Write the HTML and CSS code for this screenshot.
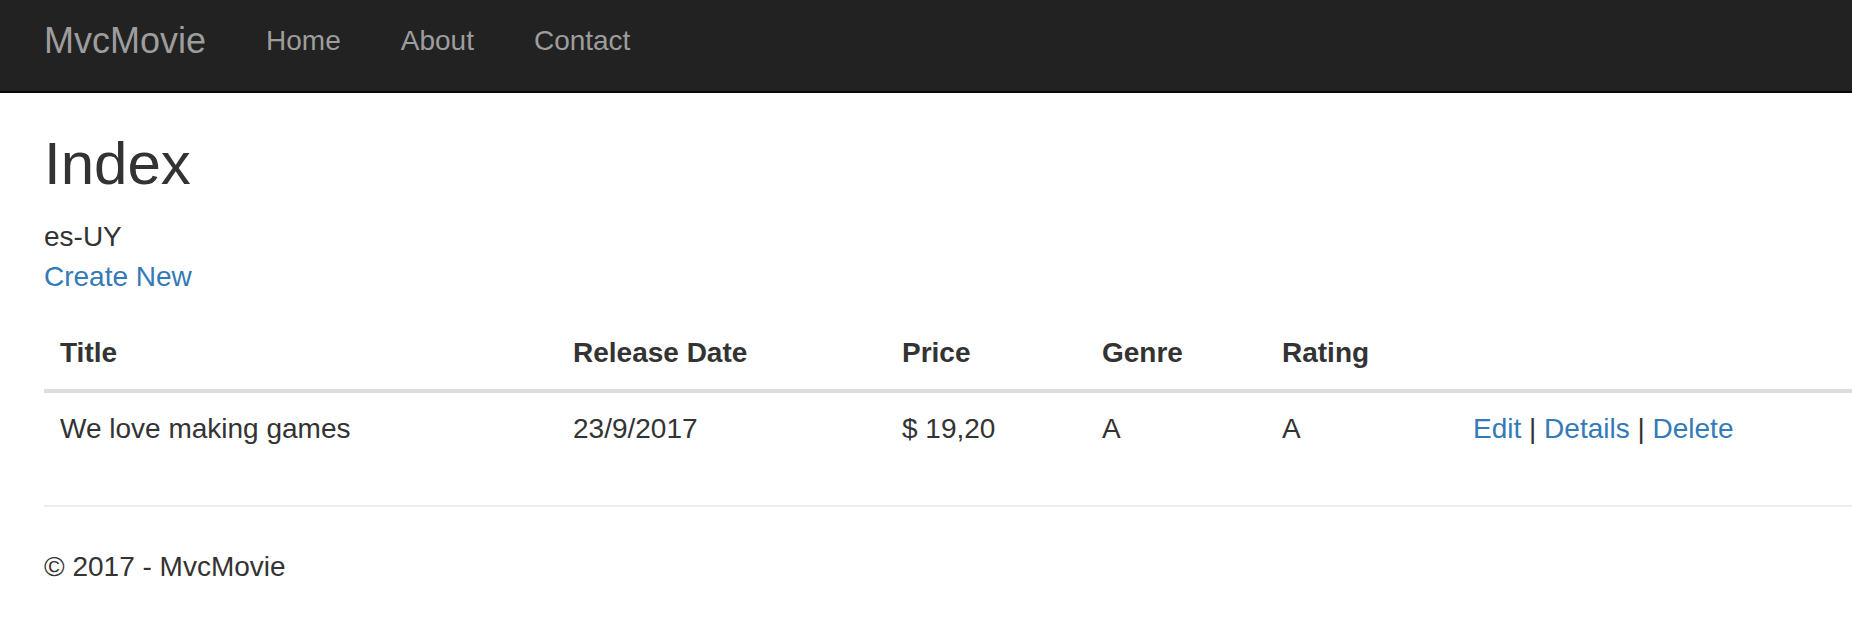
FILE: index.html
```html
<!DOCTYPE html>
<html lang="en">
  <head>
    <meta charset="UTF-8" />
    <meta name="viewport" content="width=device-width, initial-scale=1.0" />
    <title>Index - MvcMovie</title>
    <link rel="stylesheet" href="styles.css">
  </head>

  <body>
    <div class="navbar">
      <a class="navbar-brand" href="#">MvcMovie</a>
      <ul class="nav">
        <li><a href="#">Home</a></li>
        <li><a href="#">About</a></li>
        <li><a href="#">Contact</a></li>
      </ul>
    </div>

    <div class="body-content">
      <h2>Index</h2>
      es-UY
      <p><a href="#">Create New</a></p>

      <table class="table">
        <thead>
          <tr>
            <th class="col-title">Title</th>
            <th class="col-date">Release Date</th>
            <th class="col-price">Price</th>
            <th class="col-genre">Genre</th>
            <th class="col-rating">Rating</th>
            <th></th>
          </tr>
        </thead>
        <tbody>
          <tr>
            <td>We love making games</td>
            <td>23/9/2017</td>
            <td>$ 19,20</td>
            <td>A</td>
            <td>A</td>
            <td><a href="#">Edit</a> | <a href="#">Details</a> | <a href="#">Delete</a></td>
          </tr>
        </tbody>
      </table>

      <hr />
      <footer>
        <p>&copy; 2017 - MvcMovie</p>
      </footer>
    </div>
  </body>
</html>
```

FILE: styles.css
```css
html,
body {
  margin: 0;
  overflow: hidden;
}
body {
  font-family: "Liberation Sans", Arial, sans-serif;
  font-size: 28px;
  line-height: 40px;
  color: #333;
  background-color: #fff;
}
a {
  color: #337ab7;
  text-decoration: none;
}

/* top bar */
.navbar {
  display: flex;
  align-items: flex-start;
  height: 91px;
  background-color: #222;
  border-bottom: 2px solid #080808;
  padding-left: 14px;
}
.navbar-brand {
  color: #9d9d9d;
  font-size: 36px;
  line-height: 40px;
  padding: 21px 30px 30px 30px;
}
.nav {
  display: flex;
  list-style: none;
  margin: 0;
  padding: 0;
}
.nav a {
  display: block;
  color: #9d9d9d;
  font-size: 28px;
  line-height: 40px;
  padding: 21px 30px 30px 30px;
}

/* page */
.body-content {
  padding-left: 44px;
}
h2 {
  font-size: 60px;
  font-weight: 500;
  line-height: 66px;
  margin: 38px 0 20px 0;
}
p {
  margin: 0 0 20px 0;
}

.table {
  width: 1808px;
  table-layout: fixed;
  border-collapse: collapse;
  border-spacing: 0;
  margin-bottom: 40px;
}
.table th,
.table td {
  text-align: left;
  vertical-align: top;
  padding: 16px;
  line-height: 40px;
  white-space: nowrap;
}
.table th {
  font-weight: bold;
  vertical-align: bottom;
  border-bottom: 4px solid #ddd;
}
.table td {
  border-top: 2px solid #ddd;
}
.col-title {
  width: 481px;
}
.col-date {
  width: 297px;
}
.col-price {
  width: 168px;
}
.col-genre {
  width: 148px;
}
.col-rating {
  width: 159px;
}

hr {
  margin: 40px 0;
  border: 0;
  border-top: 2px solid #eee;
}
footer p {
  margin: 0 0 20px 0;
}
```
